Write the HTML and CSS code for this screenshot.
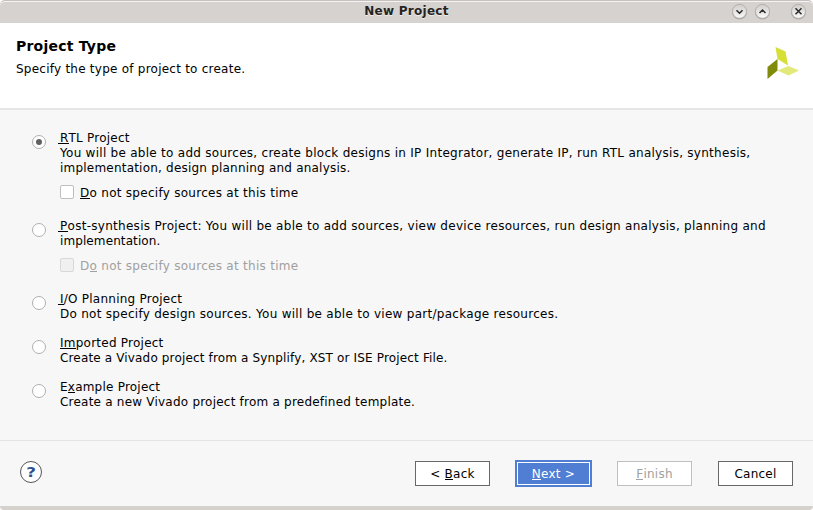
FILE: index.html
```html
<!DOCTYPE html>
<html lang="en">
<head>
<meta charset="utf-8">
<title>New Project</title>
<link rel="stylesheet" href="styles.css">
</head>
<body>
<div class="window">
  <div class="titlebar">
    <span class="title">New Project</span>
    <svg class="controls" width="77" height="22" viewBox="0 0 77 22">
      <defs><linearGradient id="g" x1="0" y1="0" x2="0" y2="1"><stop offset="0" stop-color="#cfccc9"/><stop offset="1" stop-color="#fbfbfa"/></linearGradient></defs>
      <g fill="#b0adaa"><circle cx="7.500" cy="12" r="7.6"/><circle cx="30.500" cy="12" r="7.6"/><circle cx="66.500" cy="12" r="7.6"/></g>
      <g fill="url(#g)" stroke="#a8a5a2" stroke-width=".7"><circle cx="7.500" cy="11.3" r="7"/><circle cx="30.500" cy="11.3" r="7"/><circle cx="66.500" cy="11.3" r="7"/></g>
      <path d="M4.500 10.300l3 3 3-3M27.500 13l3-3 3 3M63.500 8.300l6 6M69.500 8.300l-6 6" fill="none" stroke="#2b2b2b" stroke-width="1.5"/>
    </svg>
  </div>
  <header class="header">
    <div>
      <h1>Project Type</h1>
      <p class="t24">Specify the type of project to create.</p>
    </div>
    <svg class="logo" width="33" height="32" viewBox="0 0 33 32">
      <path d="M9.500 0L19.500 4.500 22 18.500 11.500 12z" fill="#d5df35"/>
      <path d="M1.500 20L11.500 12v11.500L1.500 32z" fill="#808a0b"/>
      <path d="M11.500 23.500L22.500 19 33 23.500 22.500 28.500z" fill="#e2e97a"/>
    </svg>
  </header>
  <main class="options">
    <section class="option">
      <i class="radio selected"></i>
      <div class="text">
        <p class="t22"><u class="wide">R</u>TL Project</p>
        <p class="t275">You will be able to add sources, create block designs in IP Integrator, generate IP, run RTL analysis, synthesis,</p>
        <p class="t21">implementation, design planning and analysis.</p>
        <div class="check"><i class="box"></i><p class="t28"><u>D</u>o not specify sources at this time</p></div>
      </div>
    </section>
    <section class="option">
      <i class="radio"></i>
      <div class="text">
        <p class="t28"><u class="wide">P</u>ost-synthesis Project: You will be able to add sources, view device resources, run design analysis, planning and</p>
        <p class="t10">implementation.</p>
        <div class="check disabled"><i class="box"></i><p class="t28">D<u>o</u> not specify sources at this time</p></div>
      </div>
    </section>
    <section class="option">
      <i class="radio"></i>
      <div class="text">
        <p class="t24"><u class="wide">I</u>/O Planning Project</p>
        <p class="t28">Do not specify design sources. You will be able to view part/package resources.</p>
      </div>
    </section>
    <section class="option">
      <i class="radio"></i>
      <div class="text">
        <p class="t24"><u>Im</u>ported Project</p>
        <p class="t15">Create a Vivado project from a Synplify, XST or ISE Project File.</p>
      </div>
    </section>
    <section class="option">
      <i class="radio"></i>
      <div class="text">
        <p class="t22">E<u>x</u>ample Project</p>
        <p class="t22">Create a new Vivado project from a predefined template.</p>
      </div>
    </section>
  </main>
  <footer class="footer">
    <span class="help"><span>?</span></span>
    <div class="buttons">
      <button class="btn"><span>&lt; <u>B</u>ack</span></button>
      <button class="btn primary"><span><u>N</u>ext &gt;</span></button>
      <button class="btn off"><span><u>F</u>inish</span></button>
      <button class="btn"><span>Cancel</span></button>
    </div>
  </footer>
  <div class="bottom"></div>
</div>
</body>
</html>
```
FILE: styles.css
```css
* { box-sizing: border-box; }
body { margin: 0; background: #fff; font: 12px/15px "DejaVu Sans", sans-serif; color: #000; }
p, h1 { margin: 0; white-space: nowrap; }
.window { width: 813px; height: 510px; display: flex; flex-direction: column; background: #f7f7f7; border-radius: 5px; }
.titlebar { height: 23px; background: #d6d2cf; border-top: 1px solid #c5c1be; box-shadow: inset 0 1px #f5f4f3; border-radius: 5px 5px 0 0; display: grid; grid-template-columns: 1fr auto 1fr; }
.title { grid-column: 2; font-weight: bold; line-height: 21px; letter-spacing: .27px; color: #242322; text-shadow: 0 1px #eeedec; }
.controls { grid-column: 3; justify-self: end; margin: -1px 4px 0 0; }
.header { height: 87px; background: #fff; border-bottom: 2px solid #e6e6e6; padding: 15px 14px 0 16px; display: flex; justify-content: space-between; }
h1 { font-size: 14px; line-height: 16px; letter-spacing: .22px; margin-bottom: 8px; }
.logo { margin-top: 9px; }
.options { height: 330px; padding: 21px 32px 0; display: flex; flex-direction: column; gap: 14px; }
.option { display: flex; gap: 14px; }
.option:nth-child(1), .option:nth-child(2) { margin-bottom: 4px; }
.radio { flex: none; width: 14px; height: 14px; margin-top: 4px; border: 1px solid #b0b0b0; border-radius: 50%; background: #fff; display: grid; place-items: center; }
.selected::after { content: ""; width: 6px; height: 6px; border-radius: 50%; background: #606060; }
.check { display: flex; gap: 6px; margin-top: 10px; }
.box { width: 14px; height: 14px; margin-top: -1px; border: 1px solid #bfbfbf; border-radius: 2px; background: #fff; }
.disabled { color: #a0a0a0; }
.disabled .box { background: #f0f0f0; border-color: #d8d8d8; }
u { text-decoration: none; position: relative; }
u::after { content: ""; position: absolute; left: 0; right: 0; bottom: 1px; height: 1px; background: currentColor; }
u.wide::after { left: -2px; }
.t10 { letter-spacing: .1px; }
.t15 { letter-spacing: .155px; }
.t21 { letter-spacing: .21px; }
.t22 { letter-spacing: .22px; }
.t24 { letter-spacing: .24px; }
.t275 { letter-spacing: .275px; }
.t28 { letter-spacing: .28px; }
.footer { height: 66px; border-top: 1px solid #e4e4e4; padding: 0 20px; display: flex; justify-content: space-between; align-items: center; }
.help { width: 22px; height: 22px; margin-bottom: 3px; border: 1px solid #555; border-radius: 50%; background: #fff; color: #304f8d; font-size: 14px; font-weight: bold; line-height: 20px; text-align: center; }
.help span { display: block; transform: scaleX(1.2); }
.buttons { display: flex; align-items: center; gap: 25px; }
.btn { width: 75px; height: 25px; padding: 1px 0 0; border: 1px solid #686868; background: #fff; color: #000; font: inherit; letter-spacing: .25px; }
.primary { width: 77px; height: 27px; border: 2px solid #4f7ed3; background: #4f7ed3; box-shadow: inset 0 0 0 1px #fff; color: #fff; }
.off { border-color: #c0c0c0; color: #a0a0a0; }
.btn:last-child { margin-left: 1px; }
.bottom { height: 4px; background: #d5d1cd; border-radius: 0 0 4px 4px; }
```
